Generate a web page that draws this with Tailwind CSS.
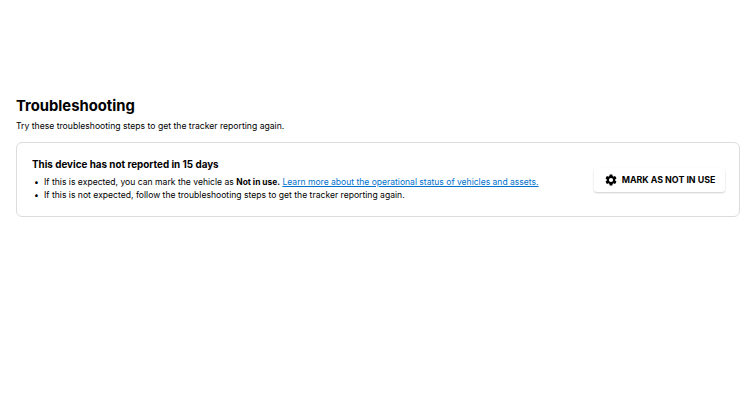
<!DOCTYPE html>
<html lang="en">
<head>
  <meta charset="UTF-8" />
  <title>Troubleshooting</title>
  <script src="https://cdn.jsdelivr.net/npm/@tailwindcss/browser@4"></script>
</head>
<body class="bg-white text-black font-['Inter',sans-serif] overflow-hidden">
  <div class="pl-4 pt-[96px]">
    <h1 class="text-[14.8px] leading-5 font-bold">Troubleshooting</h1>
    <p class="mt-[4px] text-[8.63px] leading-3">Try these troubleshooting steps to get the tracker reporting again.</p>
    <!-- Card -->
    <div class="mt-[10px] h-[75px] border border-[#dcdcdc] rounded-[6px] pl-[15px] pr-[14px] flex items-center justify-between">
      <div>
        <h2 class="text-[9.85px] leading-[12px] font-bold">This device has not reported in 15 days</h2>
        <ul class="mt-[6px] text-[8.6px] leading-[13px]">
          <li class="flex"><span class="w-[12px] pl-[2px]">•</span><span>If this is expected, you can mark the vehicle as <strong class="font-bold text-[8.4px]">Not in use.</strong> <a class="text-[#0071ce] underline text-[8.55px]">Learn more about the operational status of vehicles and assets.</a></span></li>
          <li class="flex"><span class="w-[12px] pl-[2px]">•</span><span>If this is not expected, follow the troubleshooting steps to get the tracker reporting again.</span></li>
        </ul>
      </div>
      <button class="h-[24px] w-[131px] bg-white rounded-[3px] shadow-[0_1px_2px_rgba(0,0,0,0.2)] flex items-center justify-center gap-[4px] text-[8.85px] font-bold">
        <svg class="w-[14px] h-[14px]" viewBox="0 0 24 24" fill="currentColor"><path d="M19.14 12.94c.04-.3.06-.61.06-.94s-.02-.64-.07-.94l2.03-1.58a.5.5 0 0 0 .12-.61l-1.92-3.32a.5.5 0 0 0-.59-.22l-2.39.96a7 7 0 0 0-1.62-.94l-.36-2.54a.48.48 0 0 0-.48-.41h-3.84a.48.48 0 0 0-.47.41l-.36 2.54c-.59.24-1.13.57-1.62.94l-2.39-.96a.49.49 0 0 0-.59.22L2.74 8.87a.48.48 0 0 0 .12.61l2.03 1.58c-.05.3-.09.63-.09.94s.02.64.07.94l-2.03 1.58a.5.5 0 0 0-.12.61l1.92 3.32c.12.22.37.29.59.22l2.39-.96c.5.38 1.03.7 1.62.94l.36 2.54c.05.24.24.41.48.41h3.84c.24 0 .44-.17.47-.41l.36-2.54c.59-.24 1.13-.56 1.62-.94l2.39.96c.22.08.47 0 .59-.22l1.92-3.32a.48.48 0 0 0-.12-.61l-2.01-1.58zM12 15.6A3.6 3.6 0 1 1 12 8.4a3.6 3.6 0 0 1 0 7.2z"/></svg>
        MARK AS NOT IN USE
      </button>
    </div>
  </div>
</body>
</html>
